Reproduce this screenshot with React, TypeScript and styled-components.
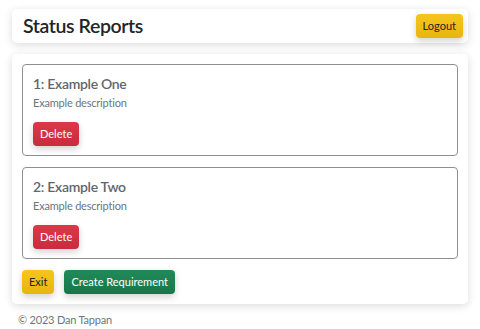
import React from 'react';
import styled, { createGlobalStyle } from 'styled-components';

const GlobalStyle = createGlobalStyle`
  body {
    margin: 0;
    background: #ffffff;
    font-family: Lato, "Liberation Sans", sans-serif;
    color: #212529;
  }
`;

const Page = styled.div`
  padding: 9px 12px 0;
  display: flex;
  flex-direction: column;
  gap: 11px;
`;

const Header = styled.header`
  display: flex;
  align-items: center;
  justify-content: space-between;
  height: 34px;
  padding: 0 5px 0 11px;
  background: #fff;
  border-radius: 5px;
  box-shadow: 0 2px 8px rgba(0, 0, 0, 0.14);
`;

const Title = styled.h1`
  margin: 0;
  font-size: 19.5px;
  font-weight: 600;
  letter-spacing: -0.4px;
  line-height: 24px;
  color: #212529;
`;

type Variant = 'warning' | 'danger' | 'success';

const variantBg: Record<Variant, string> = {
  warning: 'linear-gradient(180deg, #f5c51e, #e9b50e)',
  danger: 'linear-gradient(180deg, #dc3848, #c82c3d)',
  success: 'linear-gradient(180deg, #208b58, #187648)',
};

const variantColor: Record<Variant, string> = {
  warning: '#212529',
  danger: '#ffffff',
  success: '#ffffff',
};

const Button = styled.button<{ $variant: Variant }>`
  height: 24px;
  padding: 0 7px;
  border: none;
  border-radius: 4px;
  background: ${p => variantBg[p.$variant]};
  color: ${p => variantColor[p.$variant]};
  font-family: inherit;
  font-size: 11px;
  line-height: 24px;
  box-shadow: 0 3px 7px rgba(0, 0, 0, 0.18);
  cursor: pointer;
`;

const MainCard = styled.main`
  background: #fff;
  border-radius: 5px;
  box-shadow: 0 2px 8px rgba(0, 0, 0, 0.14);
  padding: 10px;
  display: flex;
  flex-direction: column;
  gap: 11px;
`;

const Report = styled.div`
  border: 1px solid #8f8f8f;
  border-radius: 4px;
  padding: 10px 10px 9px;
  display: flex;
  flex-direction: column;
  align-items: flex-start;
`;

const ReportTitle = styled.h2`
  margin: 0;
  font-size: 14px;
  font-weight: 600;
  letter-spacing: -0.3px;
  color: #5f666d;
  line-height: 18px;
`;

const ReportDesc = styled.p`
  margin: 2px 0 11px;
  font-size: 11px;
  letter-spacing: -0.2px;
  color: #6c757d;
  line-height: 16px;
`;

const Actions = styled.div`
  display: flex;
  gap: 10px;
`;

const Footer = styled.footer`
  margin-top: -3px;
  padding-left: 6px;
  font-size: 11px;
  letter-spacing: -0.2px;
  line-height: 16px;
  color: #6c757d;
`;

const reports = [
  { id: 1, title: 'Example One', description: 'Example description' },
  { id: 2, title: 'Example Two', description: 'Example description' },
];

const App: React.FC = () => {
  return (
    <>
      <GlobalStyle />
      <Page>
        <Header>
          <Title>Status Reports</Title>
          <Button $variant="warning">Logout</Button>
        </Header>
        <MainCard>
          {reports.map(report => (
            <Report key={report.id}>
              <ReportTitle>{report.id}: {report.title}</ReportTitle>
              <ReportDesc>{report.description}</ReportDesc>
              <Button $variant="danger">Delete</Button>
            </Report>
          ))}
          <Actions>
            <Button $variant="warning">Exit</Button>
            <Button $variant="success">Create Requirement</Button>
          </Actions>
        </MainCard>
        <Footer>© 2023 Dan Tappan</Footer>
      </Page>
    </>
  );
};

export default App;
